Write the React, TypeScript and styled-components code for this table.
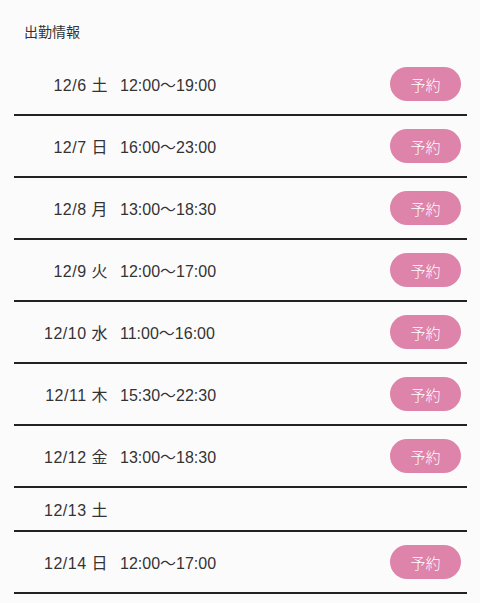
import React from "react";
import styled, { createGlobalStyle } from "styled-components";

const Global = createGlobalStyle`
  html, body { margin: 0; padding: 0; background: #fcfbfc; }
  body { font-family: "Liberation Sans", "Noto Sans CJK JP", sans-serif; color: #333; }
`;

const Page = styled.div`
  padding: 22px 13px 0 14px;
`;

const Title = styled.h2`
  margin: 0 0 12px 10px;
  font-size: 14px;
  line-height: 20px;
  font-weight: normal;
  color: #333;
`;

const List = styled.ul`
  list-style: none;
  margin: 0;
  padding: 0;
`;

const Row = styled.li<{ $compact?: boolean }>`
  display: flex;
  align-items: center;
  height: ${(p) => (p.$compact ? 42 : 60)}px;
  border-bottom: 2px solid #222;
  font-size: 16px;
  color: #333;
`;

const DateCell = styled.span`
  width: 94px;
  text-align: right;
  white-space: pre;
  letter-spacing: 0.5px;
`;

const TimeCell = styled.span`
  margin-left: 12px;
`;

const ReserveButton = styled.button`
  margin-left: auto;
  margin-right: 6px;
  width: 71px;
  height: 34px;
  border: none;
  border-radius: 17px;
  background: #de83a9;
  color: #fff;
  font-family: "Noto Sans CJK JP", sans-serif;
  font-size: 15px;
  font-weight: 300;
  padding: 0;
`;

const shifts: { date: string; time?: string }[] = [
  { date: "12/6 土", time: "12:00〜19:00" },
  { date: "12/7 日", time: "16:00〜23:00" },
  { date: "12/8 月", time: "13:00〜18:30" },
  { date: "12/9 火", time: "12:00〜17:00" },
  { date: "12/10 水", time: "11:00〜16:00" },
  { date: "12/11 木", time: "15:30〜22:30" },
  { date: "12/12 金", time: "13:00〜18:30" },
  { date: "12/13 土" },
  { date: "12/14 日", time: "12:00〜17:00" },
];

export default function App() {
  return (
    <Page>
      <Global />
      <Title>出勤情報</Title>
      <List>
        {shifts.map((s) => (
          <Row key={s.date} $compact={!s.time}>
            <DateCell>{s.date}</DateCell>
            {s.time && <TimeCell>{s.time}</TimeCell>}
            {s.time && <ReserveButton>予約</ReserveButton>}
          </Row>
        ))}
      </List>
    </Page>
  );
}
